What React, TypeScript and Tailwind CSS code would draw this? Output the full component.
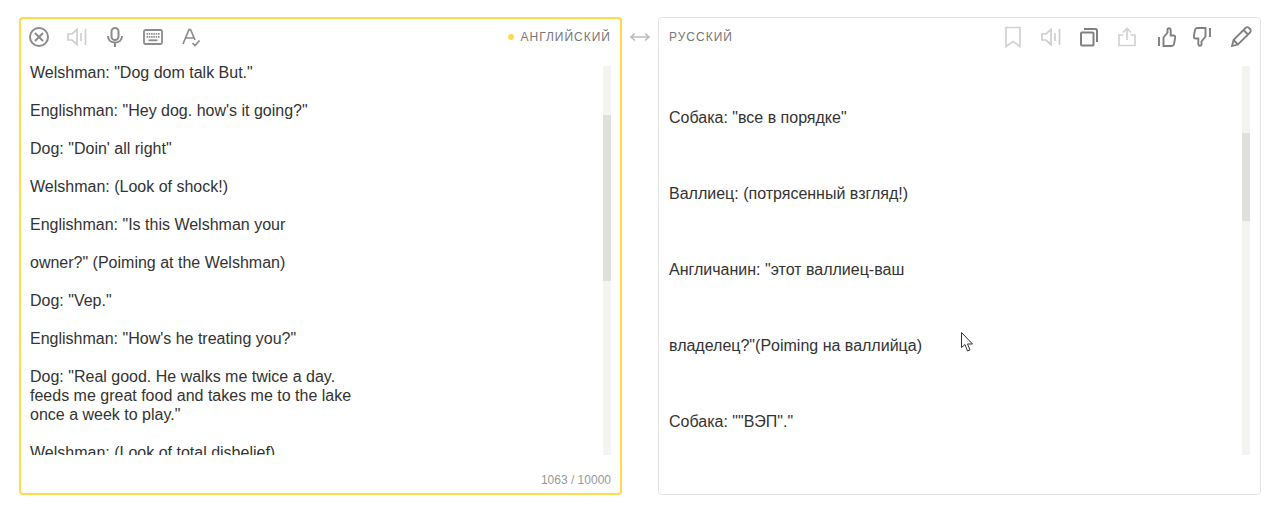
import React from "react";

const leftText = [
  ['Welshman: "Dog dom talk But."'],
  ['Englishman: "Hey dog. how\'s it going?"'],
  ['Dog: "Doin\' all right"'],
  ["Welshman: (Look of shock!)"],
  ['Englishman: "Is this Welshman your'],
  ['owner?" (Poiming at the Welshman)'],
  ['Dog: "Vep."'],
  ['Englishman: "How\'s he treating you?"'],
  [
    'Dog: "Real good. He walks me twice a day.',
    "feeds me great food and takes me to the lake",
    'once a week to play."',
  ],
  ["Welshman: (Look of total disbelief)"],
];

const rightText = [
  'Собака: "все в порядке"',
  "Валлиец: (потрясенный взгляд!)",
  'Англичанин: "этот валлиец-ваш',
  'владелец?"(Poiming на валлийца)',
  'Собака: ""ВЭП"."',
];

const Speaker = ({color}: {color: string}) => (
  <svg viewBox="0 0 20 20" className="w-5 h-5" fill="none" stroke={color} strokeWidth="1.7">
    <path d="M1 7h4l5-4.500v15l-5-4.500h-4z" />
    <path d="M14 6v8M18.500 2v16" />
  </svg>
);

const Thumb = ({className}: {className: string}) => (
  <svg viewBox="0 0 18 20" className={`w-[18px] h-5 ${className}`} fill="none" stroke="#808080" strokeWidth="1.900">
    <path d="M1 10v9" />
    <path d="M5.500 19V10.500L9.500 5.500V2.500c0-1.800 3.200-1.800 3.200.5V8.500h2.500c1.500 0 2.200 1 2 2.200l-1.200 6.300c-.3 1.300-1 2-2.200 2z" />
  </svg>
);

const Bar = ({top, height}: {top: string; height: string}) => (
  <div className={`w-2 h-[389px] mt-[3px] bg-[#f3f3ef] shrink-0 ${top}`}>
    <div className={`bg-[#dfdfdc] ${height}`} />
  </div>
);

export default function App() {
  return (
    <div className="relative w-[1281px] h-[532px] bg-white overflow-hidden pl-[19px] pt-[17px] flex items-start font-['Liberation_Sans',sans-serif] text-base text-[#333]">
      <div className="w-[603px] h-[478px] border-2 border-[#ffdb4d] rounded flex flex-col shrink-0">
        <div className="h-[44px] flex items-center pl-[8px] pr-[9px] pb-[8px] shrink-0">
          <div className="flex items-center gap-[18px]">
            <svg viewBox="0 0 20 20" className="w-5 h-5" fill="none" stroke="#8c8c8c" strokeWidth="2">
              <circle cx="10" cy="10" r="9" />
              <path d="M6 6l8 8M14 6l-8 8" />
            </svg>
            <Speaker color="#cfcfcf" />
            <svg viewBox="0 0 20 20" className="w-5 h-5" fill="none" stroke="#8c8c8c" strokeWidth="2">
              <rect x="6.500" y="1" width="7" height="12" rx="3.500" />
              <path d="M3 9c0 4 3 6.500 7 6.500s7-2.500 7-6.500M10 15.500v4.500" />
            </svg>
            <svg viewBox="0 0 20 16" className="w-5 h-4" fill="none" stroke="#8c8c8c" strokeWidth="1.800">
              <rect x="1" y="1" width="18" height="14" rx="1.500" />
              <path d="M3.500 4.800h13M3.500 7.800h13" strokeDasharray="1.500 0.800" />
              <path d="M5.500 11.300h9" />
            </svg>
            <svg viewBox="0 0 20 20" className="w-5 h-5" fill="none" stroke="#8c8c8c" strokeWidth="1.700">
              <path d="M2 17L8 2.500h1.500L14 13M4.500 11h8" />
              <path d="M11.500 16l2.500 2.500 4.500-5" />
            </svg>
          </div>
          <div className="ml-auto flex items-center text-xs tracking-[1px] text-[#777]">
            <span className="w-[6px] h-[6px] rounded-full bg-[#ffdb4d] mr-[6px]" />
            <span>АНГЛИЙСКИЙ</span>
          </div>
        </div>
        <div className="flex h-[392px] shrink-0 pr-[9px]">
          <div className="flex-1 overflow-hidden pl-[9px] leading-[19px]">
            {leftText.map((para, i) => (
              <p key={i} className="mb-[19px] whitespace-nowrap">
                {para.map((line, j) => (
                  <span key={j} className="block">
                    {line}
                  </span>
                ))}
              </p>
            ))}
          </div>
          <Bar top="pt-[49px]" height="h-[166px]" />
        </div>
        <div className="flex-1 flex items-center justify-end pr-[9px] pt-[12px] text-xs text-[#999]">
          1063 / 10000
        </div>
      </div>

      <div className="w-[36px] h-[40px] flex items-center justify-center shrink-0">
        <svg viewBox="0 0 20 10" className="w-5 h-[10px]" fill="none" stroke="#bdbdbd" strokeWidth="1.600">
          <path d="M1 5h18M5 1.500L1 5l4 3.500M15 1.500L19 5l-4 3.500" />
        </svg>
      </div>

      <div className="w-[603px] h-[478px] border border-[#e3e3e3] rounded flex flex-col shrink-0">
        <div className="h-[45px] flex items-center pl-[10px] pr-[8px] pb-[8px] shrink-0">
          <span className="text-xs tracking-[1px] text-[#777]">РУССКИЙ</span>
          <div className="ml-auto flex items-center gap-[18px]">
            <svg viewBox="0 0 20 22" className="w-5 h-[22px]" fill="none" stroke="#d2d2d2" strokeWidth="1.700">
              <path d="M3 1.500h14v19l-7-5-7 5z" />
            </svg>
            <Speaker color="#cfcfcf" />
            <svg viewBox="0 0 20 20" className="w-5 h-5" fill="none" stroke="#808080" strokeWidth="2">
              <rect x="2" y="5.500" width="12.500" height="13" rx="1" />
              <path d="M5 2h11.500a1.500 1.500 0 0 1 1.500 1.500V15" />
            </svg>
            <svg viewBox="0 0 20 20" className="w-5 h-5" fill="none" stroke="#d2d2d2" strokeWidth="1.700">
              <path d="M10 13V1.500M6 5.500l4-4 4 4" />
              <path d="M6.500 8H2v10.500h16V8h-4.500" />
            </svg>
            <Thumb className="ml-[3px]" />
            <Thumb className="-ml-[1px] rotate-180" />
            <svg viewBox="0 0 22 22" className="w-[22px] h-[22px] ml-[1px]" fill="none" stroke="#808080" strokeWidth="1.800">
              <path d="M2 20l1.500-6L15.500 2c1-1 2.500-1 3.500 0l1 1c1 1 1 2.500 0 3.500L8 18.500z" />
              <path d="M13.500 4l4.500 4.500M3.500 14l4.500 4.500" />
            </svg>
          </div>
        </div>
        <div className="flex h-[392px] shrink-0 pr-[10px]">
          <div className="flex-1 overflow-hidden pl-[10px] pt-[45px] leading-[19px]">
            {rightText.map((line, i) => (
              <p key={i} className="mb-[57px] whitespace-nowrap">
                {line}
              </p>
            ))}
          </div>
          <Bar top="pt-[67px]" height="h-[88px]" />
        </div>
      </div>

      {/* mouse pointer captured in the screenshot */}
      <svg viewBox="0 0 14 20" className="absolute left-[961px] top-[332px] w-[14px] h-5" fill="#fff" stroke="#333" strokeWidth="1">
        <path d="M.5.500v15l3.500-3 2.500 6.500 2.500-1-2.500-6h5z" />
      </svg>
    </div>
  );
}
